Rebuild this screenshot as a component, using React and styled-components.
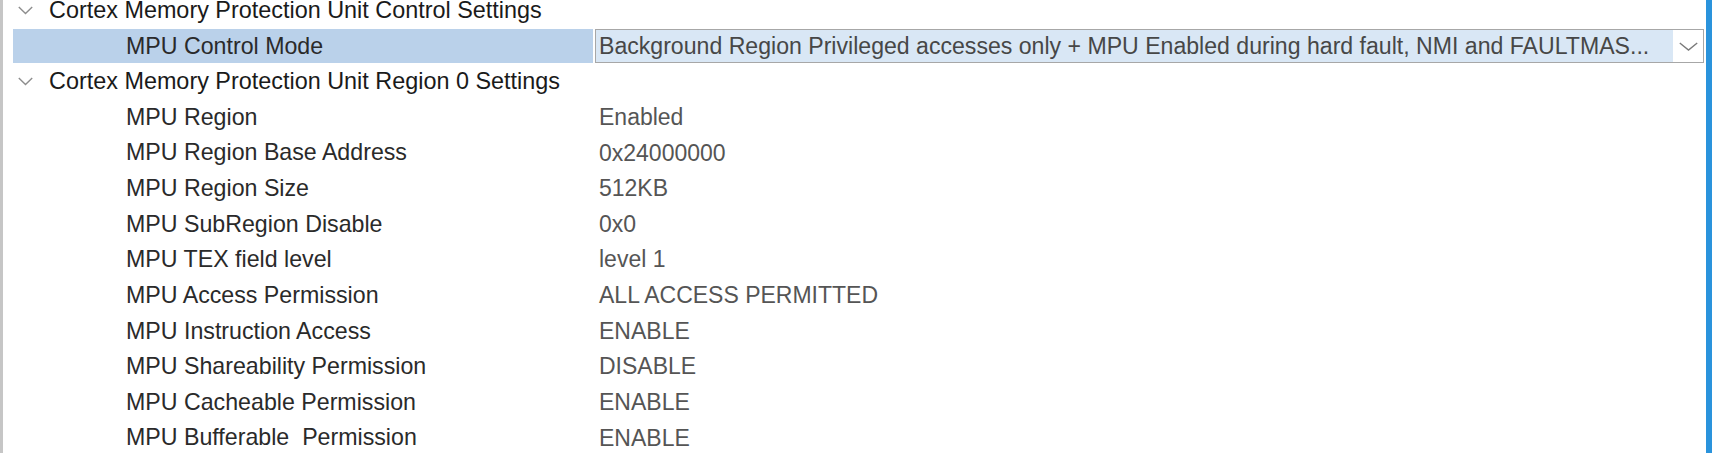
import React from "react";
import styled, { createGlobalStyle } from "styled-components";

const GlobalStyle = createGlobalStyle`
  html, body {
    margin: 0;
    padding: 0;
    background: #ffffff;
    overflow: hidden;
  }
  body {
    font-family: "Liberation Sans", Arial, sans-serif;
  }
`;

const Frame = styled.div`
  display: flex;
  width: 1712px;
  height: 453px;
  overflow: hidden;
  background: #ffffff;
`;

const LeftEdge = styled.div`
  flex: none;
  width: 3px;
  background: #c6c6c6;
`;

const RightEdge = styled.div`
  flex: none;
  width: 6px;
  background: #2a93dc;
`;

const Tree = styled.div`
  flex: 1;
  min-width: 0;
  display: flex;
  flex-direction: column;
  margin-top: -7.3px;
`;

const GroupRow = styled.div`
  flex: none;
  display: flex;
  align-items: center;
  gap: 16px;
  height: 35.64px;
  padding-left: 15px;
  font-size: 23.4px;
  line-height: 1;
  color: #1a1a1a;
  white-space: nowrap;
`;

const Chevron = styled.svg`
  flex: none;
  display: block;
`;

const PropRow = styled.div`
  flex: none;
  display: grid;
  grid-template-columns: 580px minmax(0, 1fr);
  column-gap: 2px;
  height: 35.64px;
  padding: 0 2px 0 10px;
  box-sizing: border-box;
`;

const Label = styled.div`
  display: flex;
  align-items: center;
  margin: 1px 0;
  padding-left: 113px;
  background: ${(p) => (p.$selected ? "#bad1ea" : "transparent")};
  color: #2a2a2a;
  font-size: 23.2px;
  line-height: 1;
  white-space: pre;
`;

const Value = styled.div`
  display: flex;
  align-items: center;
  padding-left: 4px;
  color: #555555;
  font-size: 23px;
  line-height: 1;
  white-space: pre;
`;

const Combo = styled.div`
  display: flex;
  align-items: stretch;
  margin: 1px 0;
  border: 1px solid #a7a7a7;
  background: #d9e7f5;
  min-width: 0;
`;

const ComboText = styled.div`
  flex: 1;
  min-width: 0;
  display: flex;
  align-items: center;
  padding-left: 3px;
  color: #474747;
  font-size: 23.1px;
  line-height: 1;
  white-space: nowrap;
  overflow: hidden;
`;

const ComboArrow = styled.div`
  flex: none;
  width: 30px;
  display: flex;
  align-items: center;
  justify-content: center;
  background: #ffffff;
`;

const ExpandIcon = () => (
  <Chevron width="15" height="9" viewBox="0 0 15 9">
    <polyline
      points="0.8,1 7.5,7.6 14.2,1"
      fill="none"
      stroke="#8d8d8d"
      strokeWidth="1.4"
    />
  </Chevron>
);

const DropIcon = () => (
  <Chevron width="19" height="9" viewBox="0 0 19 9">
    <polyline
      points="0.8,1 9.5,8 18.2,1"
      fill="none"
      stroke="#7a7a7a"
      strokeWidth="1.4"
    />
  </Chevron>
);

const region0 = [
  ["MPU Region", "Enabled"],
  ["MPU Region Base Address", "0x24000000"],
  ["MPU Region Size", "512KB"],
  ["MPU SubRegion Disable", "0x0"],
  ["MPU TEX field level", "level 1"],
  ["MPU Access Permission", "ALL ACCESS PERMITTED"],
  ["MPU Instruction Access", "ENABLE"],
  ["MPU Shareability Permission", "DISABLE"],
  ["MPU Cacheable Permission", "ENABLE"],
  ["MPU Bufferable  Permission", "ENABLE"],
];

export default function App() {
  return (
    <>
      <GlobalStyle />
      <Frame>
        <LeftEdge />
        <Tree>
          <GroupRow>
            <ExpandIcon />
            <span>Cortex Memory Protection Unit Control Settings</span>
          </GroupRow>
          <PropRow>
            <Label $selected>MPU Control Mode</Label>
            <Combo>
              <ComboText>
                Background Region Privileged accesses only + MPU Enabled during
                hard fault, NMI and FAULTMAS...
              </ComboText>
              <ComboArrow>
                <DropIcon />
              </ComboArrow>
            </Combo>
          </PropRow>
          <GroupRow>
            <ExpandIcon />
            <span>Cortex Memory Protection Unit Region 0 Settings</span>
          </GroupRow>
          {region0.map(([label, value]) => (
            <PropRow key={label}>
              <Label>{label}</Label>
              <Value>{value}</Value>
            </PropRow>
          ))}
        </Tree>
        <RightEdge />
      </Frame>
    </>
  );
}
